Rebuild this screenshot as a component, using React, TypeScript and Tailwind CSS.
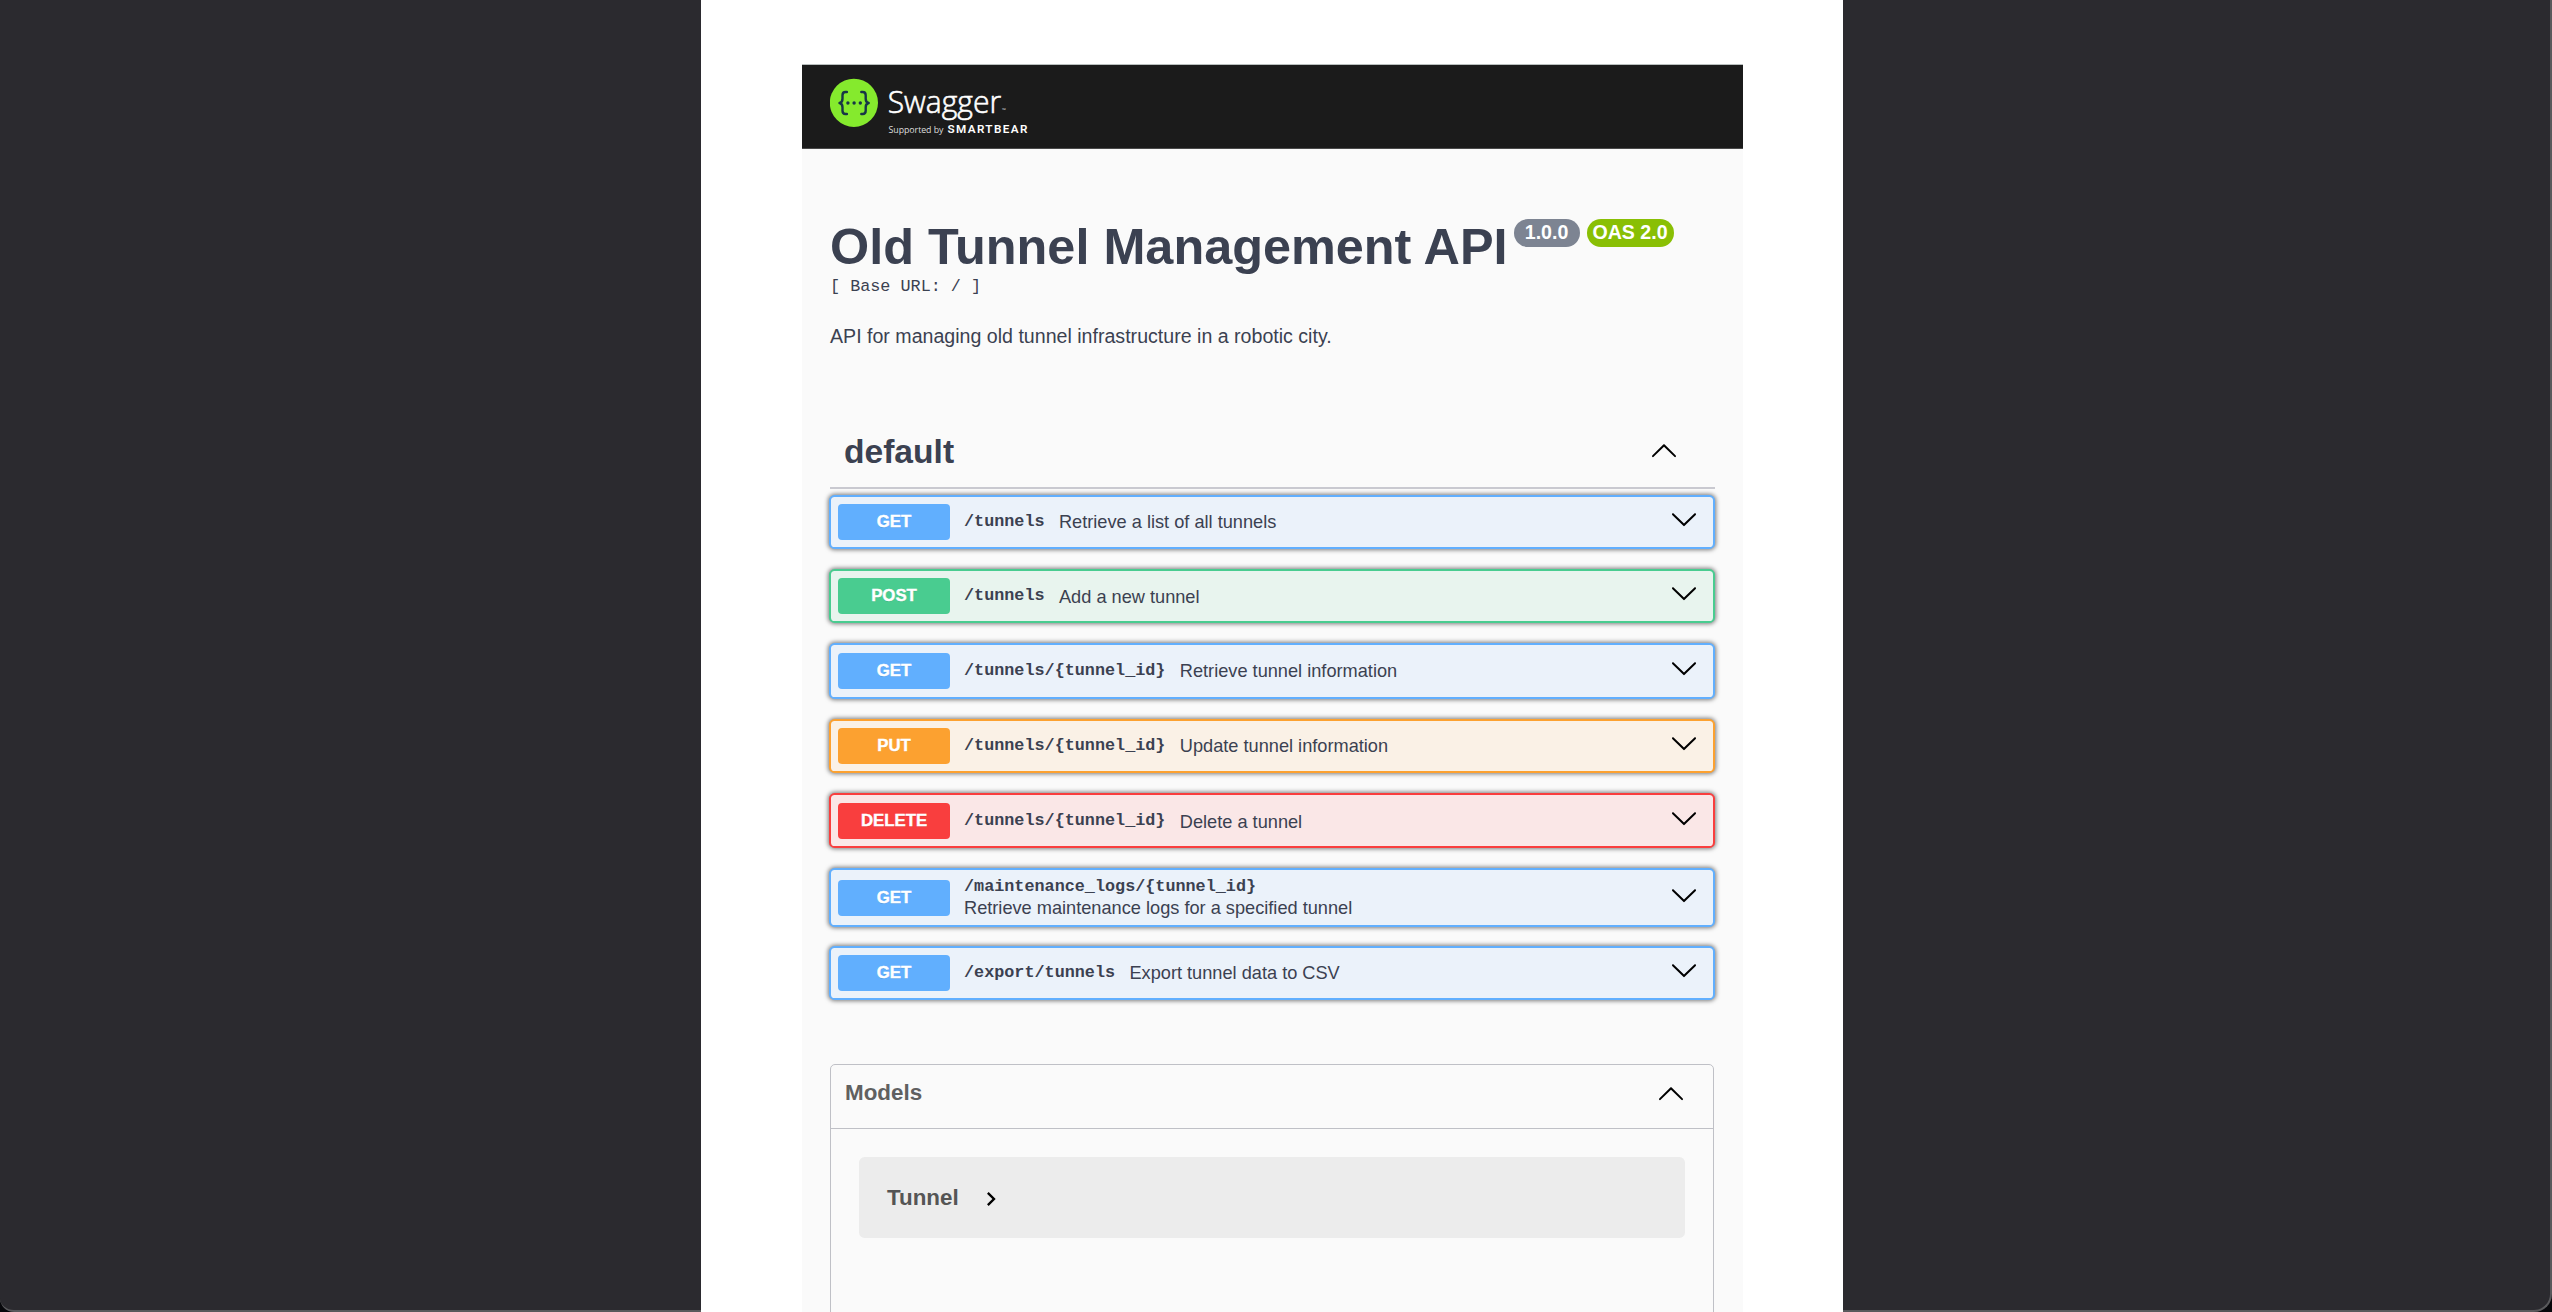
type Method = 'GET' | 'POST' | 'PUT' | 'DELETE';

const styles: Record<Method, { row: string; button: string }> = {
  GET: { row: 'border-[#61affe] bg-[#ebf2fa]', button: 'bg-[#61affe]' },
  POST: { row: 'border-[#49cc90] bg-[#e8f4ee]', button: 'bg-[#49cc90]' },
  PUT: { row: 'border-[#fca130] bg-[#faf1e6]', button: 'bg-[#fca130]' },
  DELETE: { row: 'border-[#f93e3e] bg-[#fae7e7]', button: 'bg-[#f93e3e]' },
};

interface Operation {
  method: Method;
  path: string;
  summary: string;
  size: string;
  nudge?: string;
  stacked?: boolean;
}

const operations: Operation[] = [
  { method: 'GET', path: '/tunnels', summary: 'Retrieve a list of all tunnels', size: 'h-[54px] mb-[20px]' },
  { method: 'POST', path: '/tunnels', summary: 'Add a new tunnel', size: 'h-[54px] mb-[20px]', nudge: 'pt-[2px]' },
  { method: 'GET', path: '/tunnels/{tunnel_id}', summary: 'Retrieve tunnel information', size: 'h-[56px] mb-[20px]' },
  { method: 'PUT', path: '/tunnels/{tunnel_id}', summary: 'Update tunnel information', size: 'h-[54px] mb-[20px]' },
  { method: 'DELETE', path: '/tunnels/{tunnel_id}', summary: 'Delete a tunnel', size: 'h-[55px] mb-[20px]', nudge: 'pt-[2px]' },
  { method: 'GET', path: '/maintenance_logs/{tunnel_id}', summary: 'Retrieve maintenance logs for a specified tunnel', size: 'h-[59px] mb-[19px]', stacked: true },
  { method: 'GET', path: '/export/tunnels', summary: 'Export tunnel data to CSV', size: 'h-[54px]' },
];

function Arrow({ up = false }: { up?: boolean }) {
  return (
    <svg viewBox="0 0 20 20" className="size-[28px] shrink-0" fill="#000">
      <path
        d={
          up
            ? 'M17.418 14.908c.272.268.709.268.979 0s.271-.701 0-.969l-7.908-7.83c-.27-.268-.707-.268-.979 0l-7.908 7.83c-.27.268-.27.701 0 .969.271.268.709.268.979 0L10 7.767l7.418 7.141z'
            : 'M17.418 6.109c.272-.268.709-.268.979 0s.271.701 0 .969l-7.908 7.83c-.27.268-.707.268-.979 0l-7.908-7.83c-.27-.268-.27-.701 0-.969.271-.268.709-.268.979 0L10 13.25l7.418-7.141z'
        }
      />
    </svg>
  );
}

function Logo() {
  return (
    <svg width="210" height="60" viewBox="0 0 210 60" className="block">
      <circle cx="23.9" cy="24.8" r="24.1" fill="#85ea2d" />
      <g fill="none" stroke="#173647" strokeWidth="2.4" strokeLinecap="round" strokeLinejoin="round">
        <path d="M16.9 14h-1.4c-2.2 0-3 1.2-3 3.2v3.6c0 2.4-1 3.8-3 4.2 2 .4 3 1.8 3 4.2v3.6c0 2 .8 3.2 3 3.2h1.4" />
        <path d="M31.3 14h1.4c2.2 0 3 1.2 3 3.2v3.6c0 2.4 1 3.8 3 4.2-2 .4-3 1.8-3 4.2v3.6c0 2-.8 3.2-3 3.2h-1.4" />
      </g>
      <g fill="#173647">
        <circle cx="17.900" cy="25" r="1.700" />
        <circle cx="24.100" cy="25" r="1.700" />
        <circle cx="30.300" cy="25" r="1.700" />
      </g>
      <text x="57.700" y="34.700" fill="#fff" fontFamily="'Open Sans', sans-serif" fontWeight="300" fontSize="31" stroke="#fff" strokeWidth="0.6" textLength="113.500" lengthAdjust="spacingAndGlyphs">
        Swagger
      </text>
      <text x="172" y="34.400" fill="#ddd" fontFamily="'Open Sans', sans-serif" fontSize="5">™</text>
      <text x="58.600" y="54.600" fill="#ddd" fontFamily="'Open Sans', sans-serif" fontSize="8.800" textLength="54.800" lengthAdjust="spacing">
        Supported by
      </text>
      <text x="117.400" y="54.600" fill="#fff" fontFamily="Roboto, sans-serif" fontWeight="600" fontSize="11.700" textLength="80" lengthAdjust="spacing">
        SMARTBEAR
      </text>
    </svg>
  );
}

function OperationRow({ op }: { op: Operation }) {
  const s = styles[op.method];
  return (
    <div className={`flex items-center rounded-[5.6px] border-2 pl-[7px] pr-[15px] shadow-[0_0_4px_1px_rgba(0,0,0,0.5)] ${s.row} ${op.size}`}>
      <span
        className={`flex h-[36px] w-[112px] shrink-0 items-center justify-center rounded-[4px] text-[16.8px] font-bold text-white [-webkit-text-stroke:0.4px_white] [text-shadow:0_1.4px_0_rgba(0,0,0,0.1)] ${s.button}`}
      >
        {op.method}
      </span>
      {op.stacked ? (
        <div className="ml-[14px] flex flex-1 flex-col">
          <span className="font-['Liberation_Mono',monospace] text-[16.8px] leading-[20px] font-bold">{op.path}</span>
          <span className="text-[18.2px] leading-[22px]">{op.summary}</span>
        </div>
      ) : (
        <div className="ml-[14px] flex flex-1 items-center">
          <span className="font-['Liberation_Mono',monospace] text-[16.8px] leading-[20px] font-bold">{op.path}</span>
          <span className={`ml-[14.4px] text-[18.2px] leading-[22px] ${op.nudge ?? ''}`}>{op.summary}</span>
        </div>
      )}
      <div className="-mt-[6px]">
        <Arrow />
      </div>
    </div>
  );
}

export default function App() {
  return (
    <div className="flex h-[1312px] w-[2552px] overflow-hidden bg-[#08080c] font-['Liberation_Sans',Arial,sans-serif] text-[#3b4151]">
      <aside className="w-[701px] rounded-bl-[14px] border-b-2 border-[#59595c] bg-[#2b2a2f]" />
      <main className="w-[1142px] bg-white pt-[64px] pl-[101px]">
        <div className="h-[1248px] w-[941px] overflow-hidden bg-[#fafafa]">
          <header className="h-[85px] border-t border-b border-t-[#b9bfbe] border-b-[#4a4a4a] bg-[#1b1b1b] pt-[13px] pl-[28px]">
            <Logo />
          </header>
          <div className="pr-[28px] pl-[27px]">
            <section className="pt-[68px] pl-px">
              <div className="flex items-start">
                <h1 className="text-[50.4px] leading-[60px] font-bold whitespace-nowrap">Old Tunnel Management API</h1>
                <span className="mt-[2px] ml-[6px] flex h-[28px] w-[66px] items-center justify-center rounded-full bg-[#7d8492] text-[19.6px] font-bold text-white">
                  1.0.0
                </span>
                <span className="mt-[2px] ml-[7px] flex h-[28px] w-[87px] items-center justify-center rounded-full bg-[#89bf04] text-[19.6px] font-bold whitespace-nowrap text-white">
                  OAS 2.0
                </span>
              </div>
              <pre className="font-['Liberation_Mono',monospace] text-[16.8px] leading-[20px]">[ Base URL: / ]</pre>
              <p className="mt-[27px] text-[19.6px] leading-[24px]">API for managing old tunnel infrastructure in a robotic city.</p>
            </section>
            <section className="mt-[75px]">
              <div className="ml-px flex h-[66px] items-center justify-between border-b-2 border-[#c9c9d0] pr-[37px] pl-[14px]">
                <h2 className="-mt-[7px] text-[33.6px] leading-[40px] font-bold">default</h2>
                <div className="-mt-[10px]">
                  <Arrow up />
                </div>
              </div>
              <div className="mt-[6px] flex flex-col">
                {operations.map((op) => (
                  <OperationRow key={op.method + op.path} op={op} />
                ))}
              </div>
            </section>
            <section className="mt-[64px] ml-px h-[300px] w-[884px] rounded-[5px] border border-[#bfc0c6]">
              <div className="flex h-[64px] items-center justify-between border-b border-[#bfc0c6] pr-[28px] pl-[14px]">
                <h3 className="-mt-[7px] text-[22.4px] leading-[28px] font-bold text-[#606060]">Models</h3>
                <div className="-mt-[7px]">
                  <Arrow up />
                </div>
              </div>
              <div className="mx-[28px] mt-[28px] flex h-[81px] items-center rounded-[5.6px] bg-[#ececec] pl-[28px]">
                <span className="text-[22.4px] leading-[28px] font-bold text-[#555]">Tunnel</span>
                <svg viewBox="0 0 24 24" className="mt-[3px] ml-[18px] size-[28px]" fill="#000">
                  <path d="M10 6L8.590 7.410 13.170 12l-4.580 4.590L10 18l6-6z" />
                </svg>
              </div>
            </section>
          </div>
        </div>
      </main>
      <aside className="w-[709px] rounded-br-[18px] border-r-2 border-b-2 border-[#59595c] bg-[#2b2a2f]" />
    </div>
  );
}
